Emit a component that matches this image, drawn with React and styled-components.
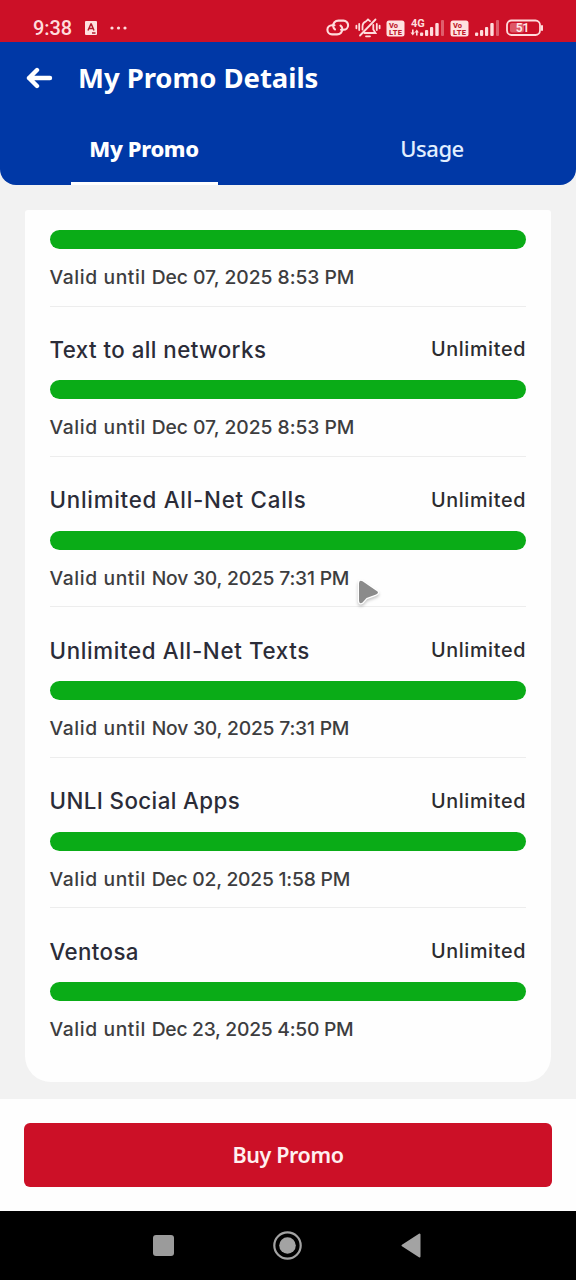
import React from "react";
import styled, { createGlobalStyle } from "styled-components";

const Global = createGlobalStyle`
  *, *::before, *::after { box-sizing: border-box; }
  body { margin: 0; background: #f2f2f2; overflow: hidden; }
`;

const Screen = styled.div`
  position: relative;
  display: flex;
  flex-direction: column;
  width: 576px;
  height: 1280px;
  background: #f2f2f2;
  font-family: Inter, "Noto Sans", sans-serif;
`;

const StatusBar = styled.header`
  display: flex;
  align-items: center;
  justify-content: space-between;
  height: 42px;
  padding: 14px 32px 0 33px;
  background: #cc1027;
  color: #ffdcdc;
`;

const StatusGroup = styled.div`
  display: flex;
  align-items: center;
  gap: ${(p) => p.$gap}px;
`;

const Clock = styled.span`
  width: 39px;
  font: 500 20px/28px Roboto, sans-serif;
  letter-spacing: -0.1px;
  white-space: nowrap;
`;

const AppHeader = styled.section`
  height: 143px;
  background: #0038a6;
  border-radius: 0 0 16px 16px;
  color: #fff;
  font-family: "Noto Sans", sans-serif;
`;

const TitleBar = styled.div`
  display: flex;
  align-items: center;
  gap: 25px;
  height: 72px;
  padding-left: 26px;
`;

const PageTitle = styled.h1`
  margin: 0;
  font-size: 27.5px;
  font-weight: 700;
  line-height: 40px;
  letter-spacing: ${(p) => p.$track}px;
  white-space: nowrap;
`;

const Tabs = styled.nav`
  display: grid;
  grid-template-columns: 1fr 1fr;
  height: 71px;
`;

const Tab = styled.div`
  display: flex;
  justify-content: center;
  align-items: center;
  position: relative;
  padding-bottom: 3px;
  color: ${(p) => (p.$active ? "#fff" : "#e2efff")};
  font-size: 22px;
  font-weight: ${(p) => (p.$active ? 800 : 500)};
  letter-spacing: ${(p) => p.$track}px;
  &::after {
    content: "";
    display: ${(p) => (p.$active ? "block" : "none")};
    position: absolute;
    bottom: 0;
    left: 70.5px;
    width: 147px;
    height: 3px;
    background: #fff;
  }
`;

const Content = styled.main`
  flex: 1;
  padding: 25px 25px 17px;
`;

const Card = styled.section`
  height: 872px;
  padding: 20px 25px 0;
  background: #fefefe;
  border-radius: 3px 3px 26px 26px;
`;

const Item = styled.article`
  height: ${(p) => (p.$headless ? 76.5 : 150.4)}px;
  border-bottom: ${(p) => (p.$last ? "0" : "1px solid #ededed")};
`;

const ItemHead = styled.div`
  display: flex;
  align-items: center;
  justify-content: space-between;
  height: 73.9px;
  padding-top: 12px;
`;

const ItemName = styled.h2`
  margin: 0 0 0 -0.5px;
  color: #2b2c38;
  font-size: 22.3px;
  font-weight: 500;
  letter-spacing: ${(p) => p.$track}px;
  white-space: nowrap;
`;

const Allowance = styled.span`
  color: #2c2c2f;
  font-size: 19.8px;
  font-weight: 500;
  letter-spacing: 0.63px;
`;

const Meter = styled.div`
  height: 19px;
  border-radius: 10px;
  background: #0aac17;
`;

const Validity = styled.p`
  margin: 0 0 0 -0.5px;
  padding-top: 14px;
  color: #3d3d3f;
  font-size: 19.3px;
  font-weight: 500;
  line-height: 28px;
  letter-spacing: 0.6px;
  white-space: nowrap;
`;

const Deadline = styled.span`
  letter-spacing: ${(p) => p.$track}px;
`;

const Footer = styled.footer`
  height: 112px;
  padding: 24px;
  background: #fefefe;
`;

const BuyButton = styled.button`
  display: block;
  width: 100%;
  height: 64px;
  padding: 0 0 1px;
  border: 0;
  border-radius: 6px;
  background: #cc1027;
  color: #fff0f0;
  font: 600 21.5px/62px "Noto Sans", sans-serif;
  letter-spacing: -0.38px;
`;

const SystemNav = styled.nav`
  display: flex;
  align-items: center;
  justify-content: center;
  gap: 99.3px;
  height: 69px;
  padding-right: 2px;
  background: #000;
`;

const Pointer = styled.svg`
  position: absolute;
  left: 351px;
  top: 573px;
`;

const PointerShape = styled.path`
  filter: drop-shadow(0 2px 1.5px rgba(0, 0, 0, 0.22));
`;

const items = [
  { until: "Dec 07, 2025 8:53 PM", vt: -0.03 },
  { name: "Text to all networks", until: "Dec 07, 2025 8:53 PM", nt: 0.45, vt: -0.03 },
  { name: "Unlimited All-Net Calls", until: "Nov 30, 2025 7:31 PM", nt: 0.75, vt: -0.2 },
  { name: "Unlimited All-Net Texts", until: "Nov 30, 2025 7:31 PM", nt: 0.66, vt: -0.2 },
  { name: "UNLI Social Apps", until: "Dec 02, 2025 1:58 PM", nt: 0.42, vt: -0.23 },
  { name: "Ventosa", until: "Dec 23, 2025 4:50 PM", nt: 0.4, vt: -0.27 },
];

function LinkIcon() {
  return (
    <svg width="24" height="20" viewBox="0 0 24 20" fill="none" stroke="#ffdcdc" strokeWidth="2.1" strokeLinecap="round">
      <path d="M8.500 7.200H6a4.600 4.600 0 0 0 0 9.200h5c3.400 0 5.600-2.600 5.300-5.800-.2-1.300-.8-2.300-1.800-3" />
      <path d="M15 11.800h2.500a4.600 4.600 0 0 0 0-9.200h-5c-3.400 0-5.600 2.600-5.300 5.800.2 1.300.8 2.300 1.800 3" />
    </svg>
  );
}

function MutedBell() {
  return (
    <svg width="26" height="22" viewBox="0 0 26 22" fill="none" stroke="#ffdcdc" strokeWidth="1.8" strokeLinecap="round">
      <path d="M7.500 12.500V9.500A5.500 5.500 0 0 1 11 4.300L13 2.500l2 1.600M18.300 8v4.500L20.500 16H9.500M11 19.300h4M5 18.500 20.500 2.500M4.200 7v6M1.400 8.700v2.600M21.800 7v6M24.600 8.700v2.600" />
    </svg>
  );
}

function VoLte() {
  return (
    <svg width="19" height="17" viewBox="0 0 19 17">
      <rect x="0.5" y="0.5" width="18" height="16" rx="2.5" fill="#ffe2e0" />
      <g fill="#c01a2c" fontFamily="Roboto, sans-serif" fontWeight="800">
        <text x="3" y="7.8" fontSize="7.5">Vo</text>
        <text x="3" y="14.8" fontSize="7.5" textLength="13">LTE</text>
      </g>
    </svg>
  );
}

function Signal({ network }) {
  return (
    <svg width={network ? 35 : 26} height="20" viewBox={network ? "0 0 35 20" : "9 0 26 20"}>
      {network && (
        <g fill="#ffdcdc">
          <text x="1" y="9.3" fontSize="11" fontWeight="700" fontFamily="Roboto, sans-serif">4G</text>
          <path d="M2 11.500h1.600v3h1.300L2.800 17.500 .5 14.500H2zM6 17.500h1.600v-3h1.300L6.800 11.500l-2.200 3H6z" />
        </g>
      )}
      <g fill="#ffdcdc">
        <rect x="10" y="14.500" width="3.200" height="3.500" rx="1" />
        <rect x="15" y="12" width="3.200" height="6" rx="1" />
        <rect x="20" y="9" width="3.200" height="9" rx="1" />
        <rect x="25.300" y="5" width="3.400" height="13" rx="1" />
        <rect x="31" y="2" width="3" height="16" rx="1" opacity=".38" />
      </g>
    </svg>
  );
}

export default function App() {
  return (
    <>
      <Global />
      <Screen>
        <StatusBar>
          <StatusGroup $gap={13}>
            <Clock>9:38</Clock>
            <svg width="12" height="14" viewBox="0 0 12 14">
              <rect width="12" height="14" rx="1" fill="#ffe2e0" />
              <path d="M3 9.500 5.900 3h.4L9 9.500M4 7.500h4M7 12h3.500" fill="none" stroke="#b51b2c" strokeWidth="1.500" />
            </svg>
            <svg width="18" height="4" viewBox="0 0 18 4" fill="#ffdcdc">
              <circle cx="2" cy="2" r="1.600" /><circle cx="8.500" cy="2" r="1.600" /><circle cx="15" cy="2" r="1.600" />
            </svg>
          </StatusGroup>
          <StatusGroup $gap={5}>
            <LinkIcon />
            <MutedBell />
            <VoLte />
            <Signal network />
            <VoLte />
            <Signal />
            <svg width="39" height="18" viewBox="-1 0 39 18">
              <rect x="1" y="1.500" width="33" height="14.500" rx="4.500" fill="none" stroke="#ffdcdc" strokeWidth="1.800" />
              <rect x="4" y="4" width="14" height="9.500" rx="2" fill="#ffdcdc" opacity=".35" />
              <rect x="35" y="6" width="2" height="6" rx="1" fill="#ffdcdc" />
              <text x="16.500" y="13" textAnchor="middle" fontFamily="Roboto, sans-serif" fontSize="12" fontWeight="600" fill="#ffe9e9">51</text>
            </svg>
          </StatusGroup>
        </StatusBar>

        <AppHeader>
          <TitleBar>
            <svg width="27" height="22" viewBox="0 0 27 22" fill="none" stroke="#fff" strokeWidth="4.400" strokeLinecap="round" strokeLinejoin="round">
              <path d="M24 11H3M11 3 3 11l8 8" />
            </svg>
            <PageTitle $track={-0.05}>My Promo Details</PageTitle>
          </TitleBar>
          <Tabs>
            <Tab $active $track={-0.4}>My Promo</Tab>
            <Tab $track={-0.45}>Usage</Tab>
          </Tabs>
        </AppHeader>

        <Content>
          <Card>
            {items.map((item, i) => (
              <Item key={i} $headless={!item.name} $last={i === items.length - 1}>
                {item.name && (
                  <ItemHead>
                    <ItemName $track={item.nt}>{item.name}</ItemName>
                    <Allowance>Unlimited</Allowance>
                  </ItemHead>
                )}
                <Meter />
                <Validity>Valid until <Deadline $track={item.vt}>{item.until}</Deadline></Validity>
              </Item>
            ))}
          </Card>
        </Content>

        <Footer>
          <BuyButton>Buy Promo</BuyButton>
        </Footer>

        <SystemNav>
          <svg width="21" height="21" viewBox="0 0 21 21"><rect width="21" height="21" rx="3" fill="#9b9b9b" /></svg>
          <svg width="29" height="29" viewBox="0 0 29 29">
            <circle cx="14.500" cy="14.500" r="13.200" fill="none" stroke="#a3a3a3" strokeWidth="2.200" />
            <circle cx="14.500" cy="14.500" r="8.300" fill="#a3a3a3" />
          </svg>
          <svg width="20" height="25" viewBox="0 0 20 25">
            <path d="M1.500 12.500 18.500 1.500v22z" fill="#a3a3a3" stroke="#a3a3a3" strokeWidth="2" strokeLinejoin="round" />
          </svg>
        </SystemNav>

        <Pointer width="34" height="38" viewBox="0 0 34 38">
          <PointerShape d="M8 10v18q.5 3.500 3.500 1.500l4-4.500L25 21.500q4-2 0-4L11.500 8.300Q8.500 6.500 8 10z" fill="#8b8b8b" stroke="#fff" strokeWidth="2.500" paintOrder="stroke" />
        </Pointer>
      </Screen>
    </>
  );
}
